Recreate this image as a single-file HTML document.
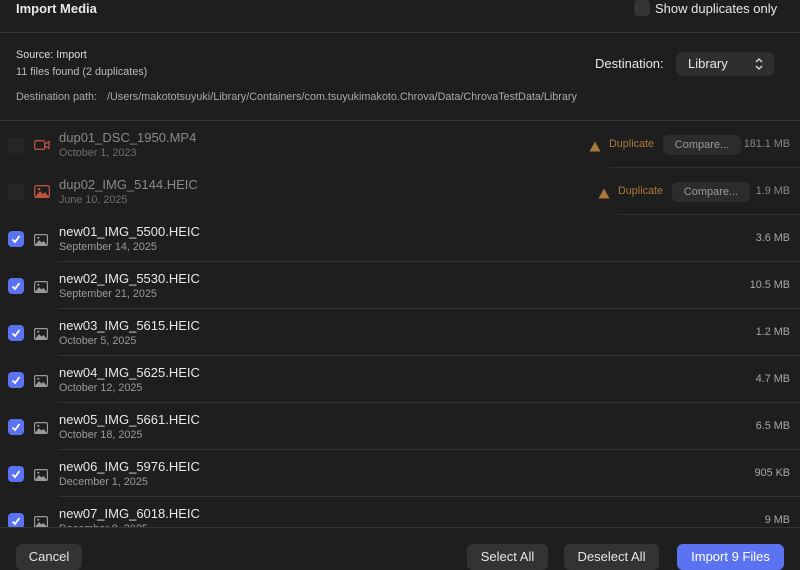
<!DOCTYPE html>
<html><head><meta charset="utf-8"><style>
*{margin:0;padding:0;box-sizing:border-box}
body{width:800px;height:568px;background:#1e1e1e;font-family:"Liberation Sans",sans-serif;color:#e6e6e6;position:relative;overflow:hidden}
.a{position:absolute;white-space:nowrap}
.hr{position:absolute;height:1px;background:#363636}
.cb{position:absolute;left:8px;width:16px;height:16px;border-radius:4px;background:#5b73f0}
.cb svg{position:absolute;left:3px;top:3px}
.cbd{background:#262626}
.ico{position:absolute;left:34px}
.nm{position:absolute;left:59px;font-size:13px;color:#e8e8e8;white-space:nowrap}
.dt{position:absolute;left:59px;font-size:10.8px;color:#9a9a9a;white-space:nowrap}
.sz{position:absolute;right:10px;font-size:10.8px;color:#a8a8a8;white-space:nowrap}
.btn{position:absolute;height:26px;border-radius:6px;background:#333;color:#e6e6e6;font-size:13px;text-align:center;line-height:26px}
#clip{position:absolute;left:0;top:0;width:800px;height:527px;overflow:hidden}
</style></head><body>
<div class="a" style="left:16px;top:1px;font-size:13px;font-weight:bold;color:#e8e8e8">Import Media</div>
<div class="a" style="left:634px;top:0;width:16px;height:16px;border-radius:4px;background:#333"></div>
<div class="a" style="left:655px;top:1px;font-size:13px;color:#e8e8e8">Show duplicates only</div>
<div class="hr" style="left:0;right:0;top:32px"></div>
<div class="a" style="left:16px;top:49px;font-size:10.8px;color:#ddd">Source: Import</div>
<div class="a" style="left:16px;top:66px;font-size:10.8px;color:#bbb">11 files found (2 duplicates)</div>
<div class="a" style="left:16px;top:91px;font-size:10.8px;color:#aaa">Destination path:<span style="position:absolute;left:91px">/Users/makototsuyuki/Library/Containers/com.tsuyukimakoto.Chrova/Data/ChrovaTestData/Library</span></div>
<div class="a" style="left:595px;top:56px;font-size:13px;color:#e8e8e8">Destination:</div>
<div class="a" style="left:676px;top:52px;width:98px;height:24px;border-radius:6px;background:#2e2e2e"></div>
<div class="a" style="left:688px;top:56px;font-size:13px;color:#e8e8e8">Library</div>
<div class="a" style="left:755px;top:57px"><svg width="8" height="14" viewBox="0 0 8 14"><path d="M1 5l3-3 3 3M1 9l3 3 3-3" stroke="#ddd" stroke-width="1.3" fill="none"/></svg></div>
<div class="hr" style="left:0;right:0;top:120px"></div>

<div id="clip">
<div class="cb cbd" style="top:137px"></div>
<div class="ico" style="top:138px"><svg width="16" height="12" viewBox="0 0 16 12"><rect x="0.7" y="1.7" width="10" height="8.6" rx="1.5" stroke="#b8553f" stroke-width="1.3" fill="none"/><path d="M11 5l4-2.5v7L11 7" stroke="#b8553f" stroke-width="1.3" fill="none"/></svg></div>
<div class="nm" style="top:130px;color:#8a8a8a">dup01_DSC_1950.MP4</div>
<div class="dt" style="top:147px;color:#6e6e6e">October 1, 2023</div>
<div class="a" style="left:589px;top:139px"><svg width="12" height="11"><path d="M6 0.5L11.5 10.5H0.5Z" fill="#a9793a"/></svg></div>
<div class="a" style="left:609px;top:138px;font-size:10.8px;color:#a9793a">Duplicate</div>
<div class="btn" style="left:663px;top:135px;width:78px;height:20px;line-height:20px;font-size:11px;background:#2c2c2c;color:#999">Compare...</div>
<div class="sz" style="top:138px;color:#888">181.1 MB</div>
<div class="hr" style="left:609px;right:0;top:167px;background:#2f2f2f"></div>

<div class="cb cbd" style="top:184px"></div>
<div class="ico" style="top:185px"><svg width="16" height="13" viewBox="0 0 16 13"><rect x="0.7" y="0.7" width="14.6" height="11.6" rx="1.5" stroke="#b8553f" stroke-width="1.3" fill="none"/><path d="M1 12L6 6l3 3 2-2 4 5z" fill="#b8553f"/><circle cx="5" cy="4" r="1.3" fill="#b8553f"/></svg></div>
<div class="nm" style="top:177px;color:#8a8a8a">dup02_IMG_5144.HEIC</div>
<div class="dt" style="top:194px;color:#6e6e6e">June 10, 2025</div>
<div class="a" style="left:598px;top:186px"><svg width="12" height="11"><path d="M6 0.5L11.5 10.5H0.5Z" fill="#a9793a"/></svg></div>
<div class="a" style="left:618px;top:185px;font-size:10.8px;color:#a9793a">Duplicate</div>
<div class="btn" style="left:672px;top:182px;width:78px;height:20px;line-height:20px;font-size:11px;background:#2c2c2c;color:#999">Compare...</div>
<div class="sz" style="top:185px;color:#888">1.9 MB</div>
<div class="hr" style="left:618px;right:0;top:214px;background:#2f2f2f"></div>

<div id="rows"></div>
</div>
<script>
var r=[["new01_IMG_5500.HEIC","September 14, 2025","3.6 MB"],["new02_IMG_5530.HEIC","September 21, 2025","10.5 MB"],["new03_IMG_5615.HEIC","October 5, 2025","1.2 MB"],["new04_IMG_5625.HEIC","October 12, 2025","4.7 MB"],["new05_IMG_5661.HEIC","October 18, 2025","6.5 MB"],["new06_IMG_5976.HEIC","December 1, 2025","905 KB"],["new07_IMG_6018.HEIC","December 8, 2025","9 MB"]];
var h="";r.forEach(function(x,i){var t=214+47*i;
h+='<div class="cb" style="top:'+(t+17)+'px"><svg width="10" height="10"><path d="M1.5 5.5l2.5 2.5 4.5-6" stroke="#fff" stroke-width="1.8" fill="none"/></svg></div>';
h+='<div class="ico" style="top:'+(t+19)+'px"><svg width="14" height="12" viewBox="0 0 14 12"><rect x="0.6" y="0.6" width="12.8" height="10.8" rx="1.3" stroke="#9a9a9a" stroke-width="1.2" fill="none"/><path d="M1 11L5 6l2.5 2.5 2-1.5 3.5 4z" fill="#9a9a9a"/><circle cx="4.3" cy="3.8" r="1.1" fill="#9a9a9a"/></svg></div>';
h+='<div class="nm" style="top:'+(t+10)+'px">'+x[0]+'</div>';
h+='<div class="dt" style="top:'+(t+27)+'px">'+x[1]+'</div>';
h+='<div class="sz" style="top:'+(t+18)+'px">'+x[2]+'</div>';
if(i<6)h+='<div class="hr" style="left:58px;right:0;top:'+(t+47)+'px;background:#333"></div>';});
document.getElementById("rows").innerHTML=h;
</script>
<div class="hr" style="left:0;right:0;top:527px;background:#333"></div>

<div class="btn" style="left:16px;top:544px;width:66px">Cancel</div>
<div class="btn" style="left:467px;top:544px;width:81px">Select All</div>
<div class="btn" style="left:564px;top:544px;width:95px">Deselect All</div>
<div class="btn" style="left:677px;top:544px;width:107px;background:#5b73f0;color:#fff">Import 9 Files</div>
</body></html>
